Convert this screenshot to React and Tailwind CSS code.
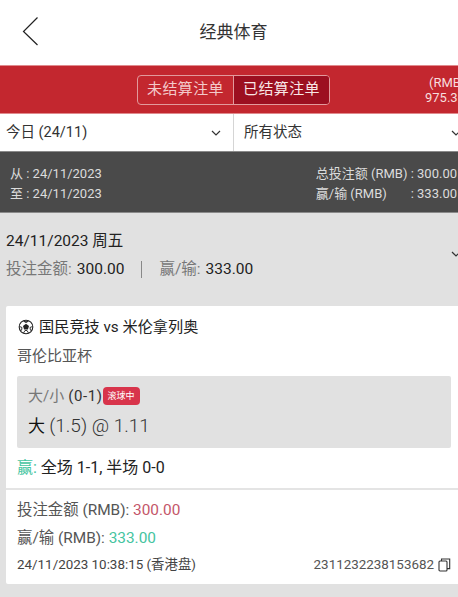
function Chevron({ className }) {
  return (
    <svg className={className} width="10" height="6" viewBox="0 0 10 6" fill="none" stroke="#333" strokeWidth="1.2">
      <path d="M1 1l4 4 4-4" />
    </svg>
  );
}
function Ball() {
  return (
    <svg width="16" height="16" viewBox="0 0 16 16" fill="none">
      <circle cx="8" cy="8" r="6.8" stroke="#222" strokeWidth="1.1" />
      <path d="M8 4.8l3 2.2-1.1 3.4H6.1L5 7z" fill="#222" />
      <path d="M1.6 7.5L4 8.5 3.5 11.5M14.4 7.5L12 8.5l.5 3M5.5 14l1.5-2.5h2L10.5 14" stroke="#222" strokeWidth="0.9" />
      <path d="M5.5 2.2L8 3.4l2.5-1.2" fill="#222" stroke="#222" strokeWidth="1" />
    </svg>
  );
}
function Copy() {
  return (
    <svg width="13" height="14" viewBox="0 0 13 14" fill="none" stroke="#333" strokeWidth="1.1">
      <rect x="1" y="3" width="8" height="10" rx="1" />
      <path d="M3.5 3V1h8.2v9.6H9" />
    </svg>
  );
}
export default function App() {
  return (
    <div className="w-[458px] h-[597px] overflow-hidden bg-[#e1e1e1] font-['Roboto','Noto_Sans_CJK_SC',sans-serif] text-[#222]">
      <header className="h-[65px] bg-white flex items-center relative">
        <svg className="ml-[22px] -mt-[4px]" width="17" height="30" viewBox="0 0 17 30" fill="none" stroke="#222" strokeWidth="1.2">
          <path d="M15.5 1.5L1.5 15.5l14 13.5" />
        </svg>
        <div className="absolute left-[9px] right-0 top-[20px] text-center text-[17px] leading-[24px] text-[#333]">经典体育</div>
      </header>

      <div className="h-[49px] bg-[#c3272f] border-y border-[#e08a8d] relative flex items-center pl-[137px]">
        <div className="flex h-[30px] w-[193px] border border-[#e29a9c] rounded-[4px] overflow-hidden text-[15px] tracking-[0.4px]">
          <div className="w-[96px] flex items-center justify-center text-[#f3c9ca] border-r border-[#e29a9c]">未结算注单</div>
          <div className="flex-1 flex items-center justify-center bg-[#9c0f20] text-[#f8e6e6]">已结算注单</div>
        </div>
        <div className="absolute left-[425px] top-[9px] w-[60px] text-[13px] leading-[15px] text-[#f6dede]">
          <div className="pl-[4px]">(RMB)</div>
          <div>975.30</div>
        </div>
      </div>

      <div className="h-[37px] bg-white flex text-[14.5px] text-[#333]">
        <div className="w-[234px] border-r border-[#d5d5d5] flex items-center justify-between pl-[6px] pr-[12px]">
          <span>今日 (24/11)</span>
          <Chevron />
        </div>
        <div className="flex-1 flex items-center pl-[10px] relative">
          <span>所有状态</span>
          <Chevron className="absolute right-[-3px] top-[16px]" />
        </div>
      </div>

      <div className="h-[62px] bg-[#4a4a4a] border-y border-[#8a8a8a] flex justify-between items-center pl-[10px] pr-[1px] pt-[3px] text-[13px] leading-[20px] text-[#dcdcdc]">
        <div>
          <div>从 : 24/11/2023</div>
          <div>至 : 24/11/2023</div>
        </div>
        <div>
          <div>总投注额 (RMB) : 300.00</div>
          <div className="flex justify-between"><span>赢/输 (RMB)</span><span>: 333.00</span></div>
        </div>
      </div>

      <div className="h-[93px] relative pl-[6px] pt-[17px]">
        <div className="text-[15.5px] leading-[22px] text-[#222]">24/11/2023 周五</div>
        <div className="mt-[6px] text-[15.5px] leading-[22px] text-[#777] flex items-center">
          <span>投注金额:</span>
          <span className="ml-[5px] text-[#222]">300.00</span>
          <span className="mx-[17px] w-[1px] h-[17px] bg-[#888]" />
          <span>赢/输:</span>
          <span className="ml-[5px] text-[#222]">333.00</span>
        </div>
        <Chevron className="absolute right-[-3px] top-[38px]" />
      </div>

      <div className="ml-[6px] h-[278px] bg-white rounded-l-[2px] flex flex-col">
        <div className="pl-[11px] pr-[7px] pt-[10px] flex-1">
          <div className="flex items-center gap-[5px] text-[15.2px] leading-[22px] text-[#222] pl-[1px]">
            <Ball />
            <span>国民竞技 vs 米伦拿列奥</span>
          </div>
          <div className="mt-[7px] text-[15px] leading-[22px] text-[#555]">哥伦比亚杯</div>
          <div className="mt-[9px] h-[72px] bg-[#e1e1e1] rounded-[2px] pl-[11px] pt-[9px]">
            <div className="flex items-center text-[15px] leading-[22px]">
              <span className="text-[#777]">大/小</span>
              <span className="ml-[4px] text-[#333] tracking-[0.6px]">(0-1)</span>
              <span className="h-[18px] w-[37px] bg-[#d8344b] rounded-[4px] text-white text-[9px] leading-[18px] text-center">滚球中</span>
            </div>
            <div className="mt-[5px] text-[19px] leading-[28px] text-[#333] flex items-center whitespace-pre">
              <span className="text-[#111] text-[17px]">大 </span><span className="font-light">(1.5) @ 1.11</span>
            </div>
          </div>
          <div className="mt-[9px] text-[16px] leading-[22px] text-[#222]">
            <span className="text-[#45c4a0]">赢:</span> 全场 1-1, 半场 0-0
          </div>
        </div>
        <div className="h-[96px] border-t-2 border-[#e4e4e4] pl-[11px] pr-[7px] pt-[9px]">
          <div className="text-[15.4px] leading-[22px] text-[#555]">投注金额 (RMB): <span className="text-[#c4566a]">300.00</span></div>
          <div className="mt-[6px] text-[15.4px] leading-[22px] text-[#555]">赢/输 (RMB): <span className="text-[#45c4a0]">333.00</span></div>
          <div className="mt-[6px] flex justify-between items-center text-[13.4px] leading-[20px] text-[#444]">
            <span>24/11/2023 10:38:15 (香港盘)</span>
            <span className="flex items-center gap-[4px] text-[#555]">2311232238153682 <Copy /></span>
          </div>
        </div>
      </div>
    </div>
  );
}
